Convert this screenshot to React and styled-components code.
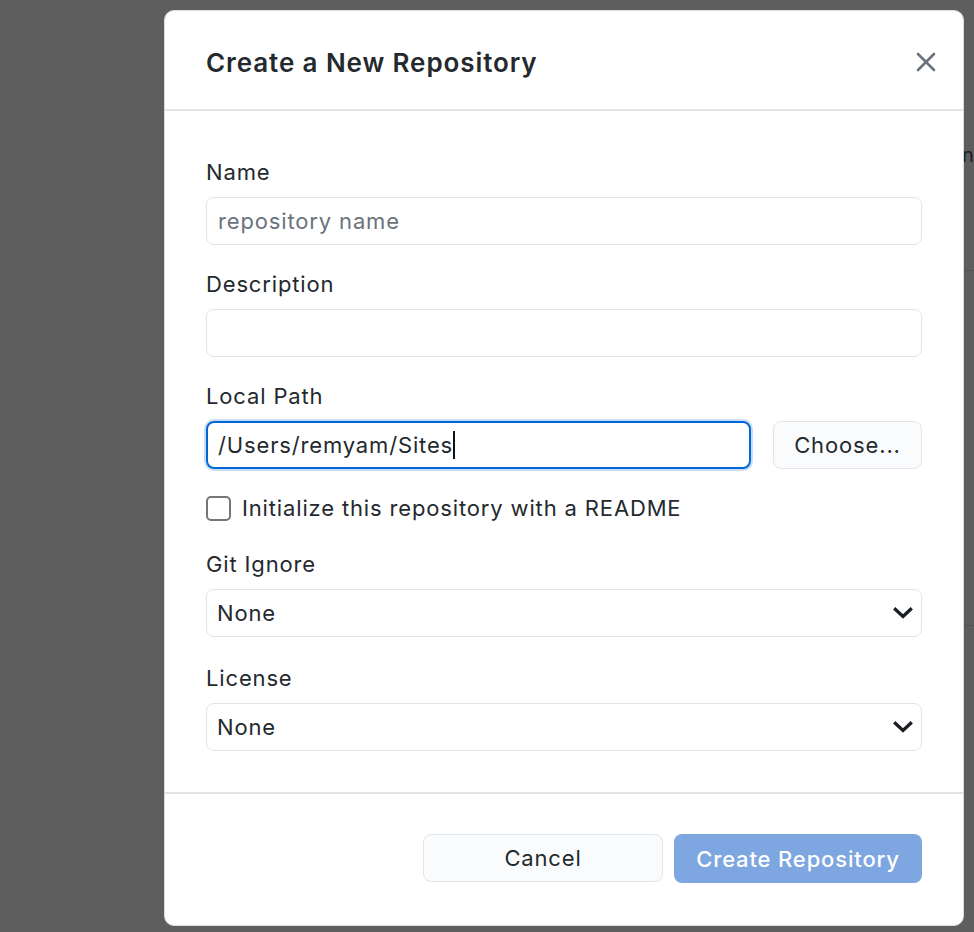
import React from "react";
import styled, { createGlobalStyle } from "styled-components";

const Global = createGlobalStyle`
  html, body { margin: 0; padding: 0; }
  body {
    background: #5e5e5e;
    font-family: Inter, "Noto Sans", "Liberation Sans", sans-serif;
    color: #24292e;
    -webkit-font-smoothing: antialiased;
  }
  * { box-sizing: border-box; }
`;

const Page = styled.div`
  position: relative;
  width: 974px;
  height: 932px;
  overflow: hidden;
  display: grid;
  grid-template-columns: 962px 1fr;
`;

const HiddenSide = styled.div`
  grid-column: 2;
  display: flex;
  flex-direction: column;
  padding-top: 143px;
`;

const HiddenText = styled.div`
  font-size: 20px;
  line-height: 24px;
  color: #1c1c1c;
`;

const HiddenLine = styled.div`
  height: 1px;
  background: #535353;
  margin-top: ${(p) => p.$top}px;
`;

const Dialog = styled.div`
  position: absolute;
  top: 10px;
  left: 164px;
  width: 800px;
  height: 916px;
  background: #fff;
  border: 1px solid #d9d9de;
  border-radius: 10px;
  display: flex;
  flex-direction: column;
`;

const Header = styled.header`
  height: 100px;
  flex-shrink: 0;
  display: flex;
  align-items: center;
  justify-content: space-between;
  padding: 4px 21px 0 41px;
  border-bottom: 2px solid #e4e4e8;
`;

const Title = styled.h1`
  margin: 0;
  font-size: 26px;
  font-weight: 600;
  letter-spacing: 0.9px;
  color: #24292e;
`;

const CloseButton = styled.button`
  border: none;
  background: none;
  padding: 6px;
  display: flex;
  color: #6a737d;
  cursor: pointer;
`;

const Body = styled.div`
  flex: 1;
  display: flex;
  flex-direction: column;
  gap: 27px;
  padding: 49px 41px 0 41px;
  border-bottom: 2px solid #e4e4e8;
`;

const Field = styled.div`
  display: flex;
  flex-direction: column;
  gap: 13px;
  margin-top: ${(p) => p.$extra || 0}px;
`;

const textStyle = `
  font-size: 22px;
  letter-spacing: 0.85px;
  color: #24292e;
`;

const Label = styled.label`
  ${textStyle}
  line-height: 24px;
`;

const Input = styled.input`
  width: 100%;
  height: 48px;
  border: 1.5px solid #e1e4e8;
  border-radius: 8px;
  padding: 0 11px;
  font: inherit;
  ${textStyle}
  background: #fff;
  outline: none;
  &::placeholder { color: #6a737d; }
`;

const PathRow = styled.div`
  display: flex;
  gap: 22px;
`;

const FocusedInput = styled.div`
  flex: 1;
  height: 48px;
  border: 2px solid #0366d6;
  border-radius: 8px;
  box-shadow: 0 0 0 2px rgba(3, 102, 214, 0.22);
  padding: 0 10px;
  display: flex;
  align-items: center;
  ${textStyle}
`;

const Caret = styled.span`
  display: inline-block;
  width: 2px;
  height: 28px;
  background: #111;
`;

const SecondaryButton = styled.button`
  width: ${(p) => p.$width}px;
  height: 48px;
  border: 1.5px solid #e1e4e8;
  border-radius: 8px;
  background: #fafbfc;
  font: inherit;
  ${textStyle}
  cursor: pointer;
`;

const CheckRow = styled.label`
  display: flex;
  align-items: center;
  gap: 11px;
  ${textStyle}
  line-height: 25px;
  margin-bottom: 4px;
`;

const CheckBox = styled.span`
  width: 25px;
  height: 25px;
  border: 2px solid #767676;
  border-radius: 5px;
  background: #fff;
  flex-shrink: 0;
`;

const Select = styled.div`
  height: 48px;
  border: 1.5px solid #e1e4e8;
  border-radius: 8px;
  padding: 0 7px 0 10px;
  display: flex;
  align-items: center;
  justify-content: space-between;
  ${textStyle}
`;

const Footer = styled.footer`
  height: 131px;
  flex-shrink: 0;
  display: flex;
  justify-content: flex-end;
  align-items: flex-start;
  gap: 11px;
  padding: 40px 41px 0 0;
`;

const PrimaryButton = styled.button`
  width: 248px;
  height: 49px;
  border: none;
  border-radius: 8px;
  background: #7ea6e1;
  font: inherit;
  ${textStyle}
  color: #fff;
  font-weight: 500;
  cursor: default;
`;

const Chevron = () => (
  <svg width="22" height="22" viewBox="0 0 22 22" fill="none">
    <path d="M3.5 7.5 L11 14.5 L18.5 7.5" stroke="#1b1f23" strokeWidth="3.4" strokeLinecap="square" strokeLinejoin="miter" />
  </svg>
);

const CloseIcon = () => (
  <svg width="20" height="20" viewBox="0 0 20 20" fill="none">
    <path d="M2 2 L18 18 M18 2 L2 18" stroke="currentColor" strokeWidth="2.6" strokeLinecap="round" />
  </svg>
);

export default function App() {
  return (
    <>
      <Global />
      <Page>
        <HiddenSide>
          <HiddenText>n</HiddenText>
          <HiddenLine $top={103} />
          <HiddenLine $top={354} />
        </HiddenSide>
        <Dialog role="dialog" aria-label="Create a New Repository">
          <Header>
            <Title>Create a New Repository</Title>
            <CloseButton aria-label="Close">
              <CloseIcon />
            </CloseButton>
          </Header>
          <Body>
            <Field>
              <Label>Name</Label>
              <Input placeholder="repository name" readOnly />
            </Field>
            <Field>
              <Label>Description</Label>
              <Input readOnly />
            </Field>
            <Field>
              <Label>Local Path</Label>
              <PathRow>
                <FocusedInput role="textbox">
                  /Users/remyam/Sites<Caret />
                </FocusedInput>
                <SecondaryButton $width={149}>Choose...</SecondaryButton>
              </PathRow>
            </Field>
            <CheckRow>
              <CheckBox />
              Initialize this repository with a README
            </CheckRow>
            <Field>
              <Label>Git Ignore</Label>
              <Select>
                None
                <Chevron />
              </Select>
            </Field>
            <Field $extra={2}>
              <Label>License</Label>
              <Select>
                None
                <Chevron />
              </Select>
            </Field>
          </Body>
          <Footer>
            <SecondaryButton $width={240}>Cancel</SecondaryButton>
            <PrimaryButton disabled>Create Repository</PrimaryButton>
          </Footer>
        </Dialog>
      </Page>
    </>
  );
}
